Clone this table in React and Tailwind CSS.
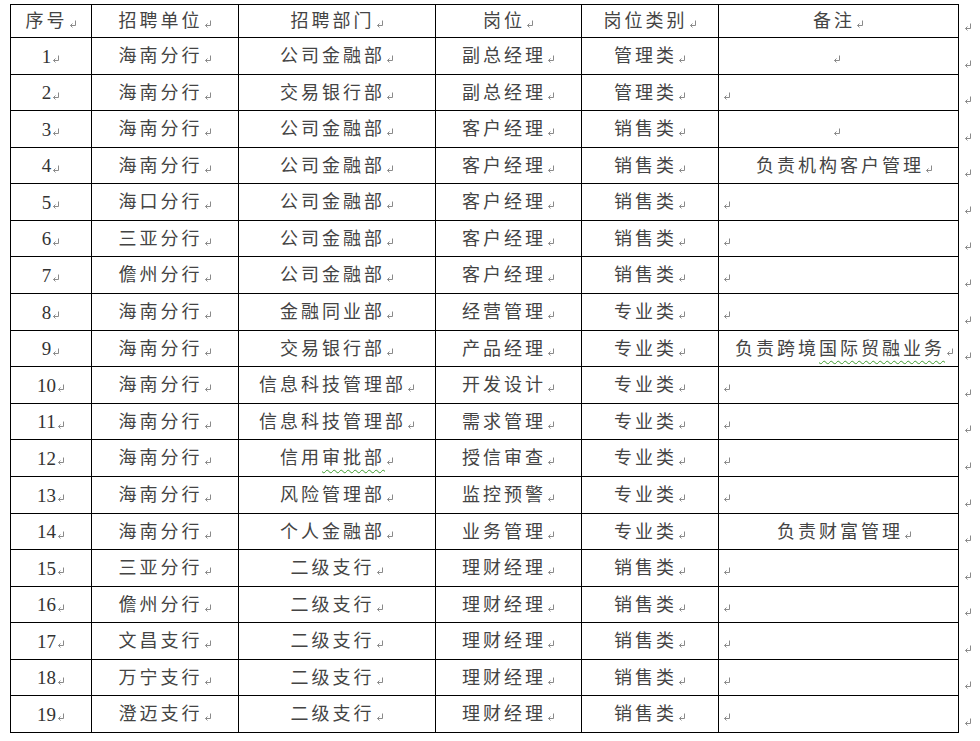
const rows = [
  ["1", "海南分行", "公司金融部", "副总经理", "管理类", { center: true }],
  ["2", "海南分行", "交易银行部", "副总经理", "管理类", null],
  ["3", "海南分行", "公司金融部", "客户经理", "销售类", { center: true }],
  ["4", "海南分行", "公司金融部", "客户经理", "销售类", { text: "负责机构客户管理" }],
  ["5", "海口分行", "公司金融部", "客户经理", "销售类", null],
  ["6", "三亚分行", "公司金融部", "客户经理", "销售类", null],
  ["7", "儋州分行", "公司金融部", "客户经理", "销售类", null],
  ["8", "海南分行", "金融同业部", "经营管理", "专业类", null],
  ["9", "海南分行", "交易银行部", "产品经理", "专业类", { text: "负责跨境", wavy: "国际贸融业务" }],
  ["10", "海南分行", "信息科技管理部", "开发设计", "专业类", null],
  ["11", "海南分行", "信息科技管理部", "需求管理", "专业类", null],
  ["12", "海南分行", ["信用", "审批部"], "授信审查", "专业类", null],
  ["13", "海南分行", "风险管理部", "监控预警", "专业类", null],
  ["14", "海南分行", "个人金融部", "业务管理", "专业类", { text: "负责财富管理" }],
  ["15", "三亚分行", "二级支行", "理财经理", "销售类", null],
  ["16", "儋州分行", "二级支行", "理财经理", "销售类", null],
  ["17", "文昌支行", "二级支行", "理财经理", "销售类", null],
  ["18", "万宁支行", "二级支行", "理财经理", "销售类", null],
  ["19", "澄迈支行", "二级支行", "理财经理", "销售类", null],
];

const headers = ["序号", "招聘单位", "招聘部门", "岗位", "岗位类别", "备注"];

const rowTemplate =
  "grid-rows-[32px_36px_35px_36px_35px_36px_35px_36px_36px_35px_36px_35px_36px_36px_35px_36px_35px_36px_35px_36px]";

const Mark = () => (
  <svg width="8" height="8" viewBox="0 0 8 8" className="inline-block ml-[1px] translate-y-[3px] shrink-0">
    <path d="M6.5 0.5 V5.5 H1.5" fill="none" stroke="#8a8a8a" strokeWidth="1" />
    <path d="M3.5 3.5 L1.5 5.5 L3.5 7.5" fill="none" stroke="#8a8a8a" strokeWidth="1" />
  </svg>
);

const Wavy = ({ children }) => (
  <span className="underline decoration-wavy decoration-[#3f9b2f] decoration-1 underline-offset-[5px]">
    {children}
  </span>
);

const Cell = ({ children, num }) => (
  <div className="bg-white flex items-center justify-center px-1 whitespace-nowrap">
    <span
      className={
        num
          ? "text-[19px] text-[#333] leading-none"
          : "text-[18px] tracking-[3px] text-[#444] leading-none"
      }
    >
      {children}
    </span>
    <Mark />
  </div>
);

const Note = ({ note }) => {
  if (!note) {
    return (
      <div className="bg-white flex items-center justify-start pl-[3px]">
        <Mark />
      </div>
    );
  }
  if (note.center) {
    return (
      <div className="bg-white flex items-center justify-center pr-[4px]">
        <Mark />
      </div>
    );
  }
  return (
    <div className="bg-white flex items-center justify-center whitespace-nowrap pl-[12px]">
      <span className="text-[18px] tracking-[3px] text-[#444] leading-none">
        {note.text}
        {note.wavy && <Wavy>{note.wavy}</Wavy>}
      </span>
      <Mark />
    </div>
  );
};

export default function App() {
  return (
    <div className="w-[980px] h-[741px] bg-white overflow-hidden font-['Liberation_Serif','Noto_Sans_CJK_SC',serif]">
      <div className="flex pt-[4px] pl-[10px]">
        <div
          className={
            "grid grid-cols-[80px_146px_196px_145px_136px_239px] gap-px p-px bg-black " + rowTemplate
          }
        >
          {headers.map((h) => (
            <Cell key={h}>{h}</Cell>
          ))}
          {rows.map((r) => [
            <Cell key={r[0] + "a"} num>
              {r[0]}
            </Cell>,
            <Cell key={r[0] + "b"}>{r[1]}</Cell>,
            <Cell key={r[0] + "c"}>
              {Array.isArray(r[2]) ? (
                <>
                  {r[2][0]}
                  <Wavy>{r[2][1]}</Wavy>
                </>
              ) : (
                r[2]
              )}
            </Cell>,
            <Cell key={r[0] + "d"}>{r[3]}</Cell>,
            <Cell key={r[0] + "e"}>{r[4]}</Cell>,
            <Note key={r[0] + "f"} note={r[5]} />,
          ])}
        </div>
        <div className={"grid gap-px py-px pl-[4px] " + rowTemplate}>
          {[headers, ...rows].map((_, i) => (
            <div key={i} className="flex items-end pb-[9px]">
              <Mark />
            </div>
          ))}
        </div>
      </div>
    </div>
  );
}
